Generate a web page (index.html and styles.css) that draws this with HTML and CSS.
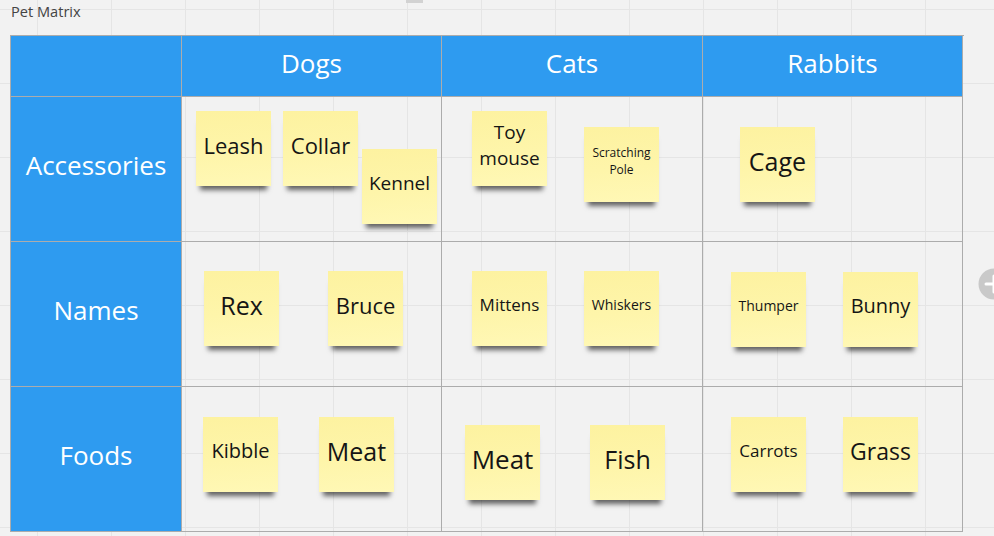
FILE: index.html
```html
<!DOCTYPE html>
<html>
<head>
<meta charset="utf-8">
<title>Pet Matrix</title>
<link rel="stylesheet" href="styles.css">
</head>
<body>
<div class="board">
  <div class="tab-stub"></div>
  <div class="frame-title">Pet Matrix</div>
  <div class="matrix">
    <div class="cell head corner"></div>
    <div class="cell head">Dogs</div>
    <div class="cell head">Cats</div>
    <div class="cell head">Rabbits</div>

    <div class="cell side">Accessories</div>
    <div class="cell body">
      <div class="note n-leash f22">Leash</div>
      <div class="note n-collar f22">Collar</div>
      <div class="note n-kennel f19">Kennel</div>
    </div>
    <div class="cell body">
      <div class="note n-toy f19">Toy<br>mouse</div>
      <div class="note n-scratch f12">Scratching<br>Pole</div>
    </div>
    <div class="cell body">
      <div class="note n-cage f25">Cage</div>
    </div>

    <div class="cell side">Names</div>
    <div class="cell body">
      <div class="note n-rex f25">Rex</div>
      <div class="note n-bruce f22">Bruce</div>
    </div>
    <div class="cell body">
      <div class="note n-mittens f17">Mittens</div>
      <div class="note n-whiskers f14">Whiskers</div>
    </div>
    <div class="cell body">
      <div class="note n-thumper f14">Thumper</div>
      <div class="note n-bunny f20">Bunny</div>
    </div>

    <div class="cell side">Foods</div>
    <div class="cell body">
      <div class="note n-kibble f20">Kibble</div>
      <div class="note n-meat1 f25">Meat</div>
    </div>
    <div class="cell body">
      <div class="note n-meat2 f26">Meat</div>
      <div class="note n-fish f25">Fish</div>
    </div>
    <div class="cell body">
      <div class="note n-carrots f17">Carrots</div>
      <div class="note n-grass f23">Grass</div>
    </div>
  </div>
  <div class="add-btn" aria-label="Add">
    <svg width="32" height="32" viewBox="0 0 32 32"><circle cx="16" cy="16" r="15.5" fill="#c9c9c9"/><path d="M16 8v16M8 16h16" stroke="#fff" stroke-width="3" stroke-linecap="round"/></svg>
  </div>
</div>
</body>
</html>
```

FILE: styles.css
```css
html, body {
  margin: 0;
  padding: 0;
}

body {
  width: 994px;
  height: 536px;
  overflow: hidden;
  font-family: "Open Sans", "Liberation Sans", sans-serif;
}

.board {
  position: relative;
  width: 994px;
  height: 536px;
  padding-left: 10px;
  box-sizing: border-box;
  background-color: #f2f2f2;
  background-image:
    linear-gradient(to right, #e5e5e5 1px, transparent 1px),
    linear-gradient(to bottom, #e5e5e5 1px, transparent 1px);
  background-size: 74px 74px;
  background-position: 37px 9px;
}

.tab-stub {
  position: absolute;
  left: 406px;
  top: 0;
  width: 17px;
  height: 3px;
  background: #d2d2d2;
}

.frame-title {
  padding-left: 1px;
  font-size: 14.6px;
  line-height: 22px;
  color: #444444;
  margin-bottom: 13px;
}

.matrix {
  display: grid;
  grid-template-columns: 171px 260px 261px 260px;
  grid-template-rows: 61px 145px 145px 145px;
  width: 953px;
  border-left: 1px solid #acacac;
  border-top: 1px solid #acacac;
}

.cell {
  box-sizing: border-box;
  border-right: 1px solid #acacac;
  border-bottom: 1px solid #acacac;
  position: relative;
}

.head,
.side {
  background: #2e9bf0;
  color: #ffffff;
  font-size: 26px;
  display: flex;
  align-items: center;
  justify-content: center;
}

.head {
  padding-bottom: 7px;
}

.side {
  padding-bottom: 8px;
}

.note {
  position: absolute;
  width: 75px;
  height: 75px;
  box-sizing: border-box;
  padding-bottom: 8px;
  display: flex;
  align-items: center;
  justify-content: center;
  text-align: center;
  color: #151515;
  background: linear-gradient(175deg, #fdf2a0 0%, #fef5aa 55%, #fff8b6 100%);
  box-shadow: 0 8px 5px -4px rgba(0, 0, 0, 0.6);
}

.f12 { font-size: 12px; line-height: 17px; }
.f14 { font-size: 14px; line-height: 19px; }
.f17 { font-size: 17px; line-height: 22px; }
.f19 { font-size: 19px; line-height: 26px; }
.f20 { font-size: 20px; line-height: 26px; }
.f22 { font-size: 22px; line-height: 28px; }
.f23 { font-size: 23px; line-height: 30px; }
.f25 { font-size: 25px; line-height: 32px; }
.f26 { font-size: 26px; line-height: 32px; }

.n-leash { left: 14px; top: 14px; }
.n-collar { left: 101px; top: 14px; }
.n-kennel { left: 180px; top: 52px; }
.n-toy { left: 30px; top: 14px; }
.n-scratch { left: 142px; top: 30px; }
.n-cage { left: 37px; top: 30px; }

.n-rex { left: 22px; top: 29px; }
.n-bruce { left: 146px; top: 29px; }
.n-mittens { left: 30px; top: 29px; }
.n-whiskers { left: 142px; top: 29px; }
.n-thumper { left: 28px; top: 30px; }
.n-bunny { left: 140px; top: 30px; }

.n-kibble { left: 21px; top: 30px; }
.n-meat1 { left: 137px; top: 30px; }
.n-meat2 { left: 23px; top: 38px; }
.n-fish { left: 148px; top: 38px; }
.n-carrots { left: 28px; top: 30px; }
.n-grass { left: 140px; top: 30px; }

.add-btn {
  position: absolute;
  left: 978px;
  top: 268px;
  width: 32px;
  height: 32px;
}

.add-btn svg {
  display: block;
}
```
